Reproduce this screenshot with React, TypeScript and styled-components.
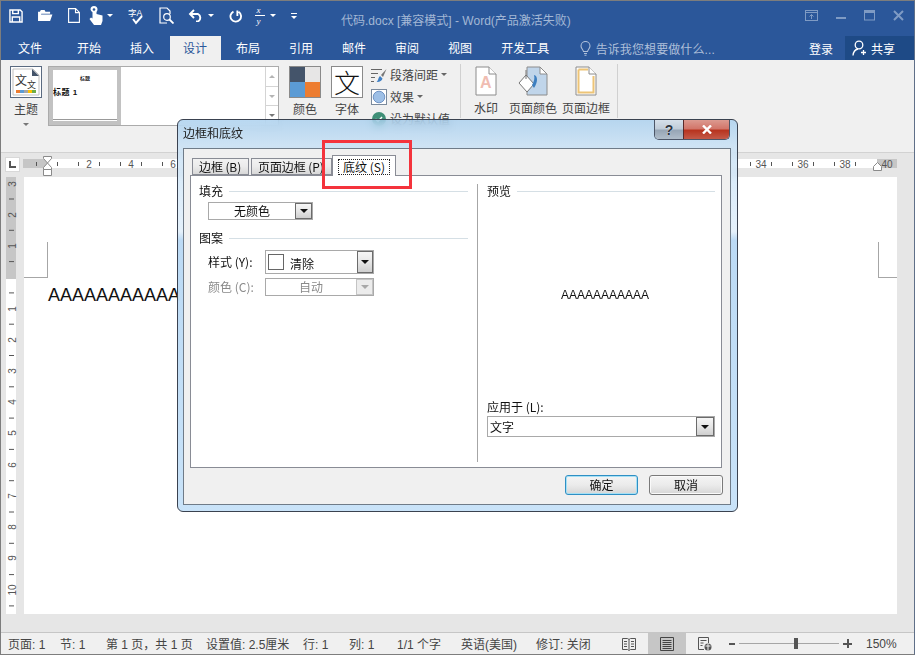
import React from 'react';
import styled, { createGlobalStyle } from 'styled-components';

const GlobalStyle = createGlobalStyle`
  html, body { margin: 0; padding: 0; background: #fff; }
  body { font-family: "Liberation Sans", "Noto Sans CJK SC", sans-serif; font-size: 12px; }
  * { box-sizing: border-box; }
`;

const Window = styled.div`
  position: relative;
  width: 915px;
  height: 655px;
  display: flex;
  flex-direction: column;
  overflow: hidden;
  border: 1px solid #7d7d7d;
  border-right-color: #5f6f88;
  background: #e6e6e6;
`;

/* title bar */
const TitleBar = styled.div`
  height: 35px;
  flex: none;
  display: flex;
  align-items: center;
  position: relative;
  background: #2b579a;
  padding: 0 0 6px 8px;
`;
const Qat = styled.div`
  display: flex;
  align-items: center;
  height: 29px;
`;
const QatIcon = styled.svg<{ $ml: number }>`
  margin-left: ${(p) => p.$ml}px;
  flex: none;
  display: block;
`;
const DocTitle = styled.div`
  position: absolute;
  left: 340px;
  top: 12px;
  color: #a3b7d5;
  font-size: 12px;
  line-height: 16px;
  white-space: nowrap;
`;
const WinButtons = styled.div`
  position: absolute;
  right: 10px;
  top: 9px;
  display: flex;
  gap: 18px;
`;

/* tabs */
const TabRow = styled.div`
  height: 24px;
  flex: none;
  display: flex;
  gap: 2px;
  align-items: stretch;
  background: #2b579a;
`;
const Tab = styled.div<{ $active?: boolean; $file?: boolean }>`
  width: ${(p) => (p.$file ? '58px' : 'auto')};
  margin-right: ${(p) => (p.$file ? '2.5px' : '0')};
  padding: 0 13.5px 1px;
  display: flex;
  align-items: center;
  justify-content: center;
  white-space: nowrap;
  font-size: 12px;
  color: ${(p) => (p.$active ? '#2b579a' : '#fff')};
  background: ${(p) => (p.$active ? '#f0f0f0' : 'transparent')};
`;
const TellMe = styled.div`
  margin-left: 15px;
  display: flex;
  align-items: center;
  gap: 5px;
  color: #aebfd9;
  font-size: 12px;
  letter-spacing: 0.1px;
`;
const SignIn = styled.div`
  margin-left: auto;
  display: flex;
  align-items: center;
  color: #fff;
  font-size: 12px;
`;
const Share = styled.div`
  margin-left: 10px;
  width: 69px;
  display: flex;
  align-items: center;
  gap: 4px;
  padding-left: 7px;
  background: #1e4a86;
  color: #fff;
  font-size: 12px;
`;

/* ribbon */
const Ribbon = styled.div`
  height: 93px;
  flex: none;
  display: flex;
  align-items: flex-start;
  padding: 6px 0 0 9px;
  background: #f0f0f0;
  border-bottom: 1px solid #d2d2d2;
`;
const LargeBtn = styled.div<{ $w: number; $ml?: number }>`
  width: ${(p) => p.$w}px;
  margin-left: ${(p) => p.$ml ?? 0}px;
  flex: none;
  display: flex;
  flex-direction: column;
  align-items: center;
  color: #444;
  font-size: 12px;
  line-height: 16px;
  white-space: nowrap;
`;
const BtnLabel = styled.div<{ $mt?: number }>`
  height: 16px;
  margin-top: ${(p) => p.$mt ?? 4}px;
`;
const IconBox = styled.div`
  width: 32px;
  height: 32px;
  flex: none;
`;
const ThemeFrame = styled(IconBox)`
  border: 1px solid #5a6a80;
  background: #fff;
  padding: 1px;
`;
const ColorGrid = styled(IconBox)`
  display: grid;
  grid-template-columns: 1fr 1fr;
  grid-template-rows: 1fr 1fr;
  border: 1px solid #8a8a8a;
`;
const ColorCell = styled.div<{ $c: string }>`
  background: ${(p) => p.$c};
`;
const FontFrame = styled(IconBox)`
  border: 1px solid #8a8a8a;
  background: #fff;
  display: flex;
  align-items: center;
  justify-content: center;
  color: #111;
  font-family: "Noto Sans CJK SC", serif;
  font-weight: 300;
  font-size: 26px;
  line-height: 28px;
`;
const Gallery = styled.div`
  width: 231px;
  height: 60px;
  margin-left: 6px;
  flex: none;
  display: flex;
  justify-content: space-between;
  background: #fff;
  border: 1px solid #ababab;
`;
const Thumb = styled.div`
  width: 72px;
  height: 58px;
  border: 4px solid #c2c2c2;
  border-top-width: 3px;
  background: #fff;
  display: flex;
  flex-direction: column;
  overflow: hidden;
`;
const ThumbHead = styled.div`
  font-size: 5px;
  line-height: 6px;
  font-weight: 700;
  text-align: center;
  margin-top: 5px;
  color: #222;
`;
const ThumbTitle = styled.div`
  font-size: 8px;
  line-height: 10px;
  font-weight: 700;
  margin-top: 7px;
  color: #111;
  letter-spacing: 0.5px;
`;
const ThumbLine = styled.div`
  margin-top: auto;
  height: 1px;
  margin-bottom: 1px;
  background: #999;
`;
const GalleryScroll = styled.div`
  width: 13px;
  display: flex;
  flex-direction: column;
  border-left: 1px solid #d4d4d4;
`;
const ScrollBtn = styled.div<{ $last?: boolean }>`
  flex: 1;
  display: flex;
  align-items: center;
  justify-content: center;
  border-bottom: ${(p) => (p.$last ? 'none' : '1px solid #d4d4d4')};
`;
const TriUp = styled.span`
  width: 0;
  height: 0;
  border: 3px solid transparent;
  border-top: 0;
  border-bottom: 3px solid #b4b4b4;
`;
const TriDown = styled.span<{ $c?: string; $ml?: number; $mt?: number }>`
  width: 0;
  height: 0;
  flex: none;
  margin-left: ${(p) => p.$ml ?? 0}px;
  margin-top: ${(p) => p.$mt ?? 0}px;
  border: 3px solid transparent;
  border-bottom: 0;
  border-top: 3px solid ${(p) => p.$c ?? '#b4b4b4'};
`;
const SmallList = styled.div`
  width: 90px;
  height: 54px;
  margin-left: 8px;
  flex: none;
  border-right: 1px solid #d0d0d0;
  margin-top: -2px;
  padding-top: 2px;
  display: flex;
  flex-direction: column;
  gap: 5px;
`;
const SmallRow = styled.div`
  height: 17px;
  flex: none;
  display: flex;
  align-items: center;
  gap: 3px;
  color: #444;
  font-size: 12px;
  white-space: nowrap;
`;
const PageGroup = styled.div`
  height: 54px;
  margin-top: -2px;
  padding-top: 2px;
  width: 157px;
  flex: none;
  display: flex;
  border-right: 1px solid #d0d0d0;
`;

/* ruler */
const RulerRow = styled.div`
  height: 24px;
  flex: none;
  display: flex;
  padding-left: 4px;
  background: #e6e6e6;
`;
const RulerCorner = styled.div`
  width: 15px;
  height: 15px;
  margin-top: 4px;
  background: #fff;
  border: 1px solid #d8d8d8;
  display: flex;
  align-items: center;
  justify-content: center;
`;
const RulerSvg = styled.svg`
  margin-left: 3px;
  display: block;
  overflow: visible;
  text {
    font-family: "Liberation Sans", sans-serif;
    font-size: 10px;
    fill: #555;
    text-anchor: middle;
  }
`;

/* document */
const DocArea = styled.div`
  flex: 1;
  min-height: 0;
  display: flex;
  padding: 0 17px 18px 5px;
`;
const VRulerSvg = styled(RulerSvg)`
  margin-left: 0;
  flex: none;
`;
const Page = styled.div`
  flex: 1;
  margin-left: 7px;
  background: #fff;
`;
const MarginMarks = styled.div`
  display: flex;
  justify-content: space-between;
  padding-top: 65px;
`;
const CropMark = styled.div<{ $side: 'left' | 'right' }>`
  height: 36px;
  width: ${(p) => (p.$side === 'left' ? '24px' : '19px')};
  border-bottom: 1px solid #a6a6a6;
  ${(p) => (p.$side === 'left' ? 'border-right' : 'border-left')}: 1px solid #a6a6a6;
`;
const BodyText = styled.div`
  margin-top: 6px;
  padding-left: 24px;
  font-size: 18px;
  line-height: 22px;
  color: #111;
`;

/* status bar */
const StatusBar = styled.div`
  height: 22px;
  flex: none;
  display: flex;
  align-items: center;
  padding-left: 7px;
  background: #f0f0f0;
  border-top: 1px solid #c6c6c6;
  color: #444;
  font-size: 12px;
  white-space: nowrap;
`;
const StatusItem = styled.div<{ $w: number }>`
  width: ${(p) => p.$w}px;
  flex: none;
`;
const ViewBtn = styled.div<{ $active?: boolean }>`
  width: 38px;
  height: 100%;
  flex: none;
  display: flex;
  align-items: center;
  justify-content: center;
  background: ${(p) => (p.$active ? '#c6c6c6' : 'transparent')};
`;
const ZoomPlus = styled.div`
  width: 9px;
  height: 9px;
  flex: none;
  background:
    linear-gradient(#555, #555) center / 9px 2px no-repeat,
    linear-gradient(#555, #555) center / 2px 9px no-repeat;
`;
const ZoomMinus = styled.div`
  width: 6px;
  height: 2px;
  margin-left: 5px;
  background: #555;
  flex: none;
`;
const ZoomTrack = styled.div`
  position: relative;
  width: 100px;
  height: 1px;
  margin: 0 4px;
  background: #a6a6a6;
  flex: none;
`;
const ZoomKnob = styled.div`
  position: absolute;
  left: 55px;
  top: -5px;
  width: 4px;
  height: 11px;
  background: #555;
`;
const ZoomPct = styled.div`
  margin-left: 14px;
`;

/* dialog */
const Dialog = styled.div`
  position: absolute;
  left: 176px;
  top: 118px;
  width: 561px;
  height: 393px;
  display: flex;
  flex-direction: column;
  padding: 0 6px 6px 5px;
  border: 1px solid #3a4250;
  border-radius: 6px;
  font-family: "Noto Sans CJK SC", "Liberation Sans", sans-serif;
  color: #111;
  backdrop-filter: blur(5px);
  background: linear-gradient(
    180deg,
    rgba(160, 203, 238, 0.72) 0,
    rgba(195, 223, 246, 0.72) 28px,
    rgba(224, 238, 250, 0.85) 112px,
    rgba(184, 216, 244, 0.95) 120px,
    rgba(198, 225, 248, 0.95) 100%
  );
`;
const DialogHead = styled.div`
  height: 28px;
  flex: none;
  display: flex;
  align-items: center;
  padding-bottom: 4px;
  font-size: 12px;
  color: #222;
`;
const CaptionBtns = styled.div`
  position: absolute;
  top: 0;
  right: 7px;
  height: 20px;
  display: flex;
  border: 1px solid #4c5668;
  border-top: 0;
  border-radius: 0 0 5px 5px;
  overflow: hidden;
`;
const CaptionBtn = styled.div<{ $close?: boolean }>`
  display: flex;
  align-items: center;
  justify-content: center;
  width: ${(p) => (p.$close ? '46px' : '28px')};
  border-left: ${(p) => (p.$close ? '1px solid #5a2a2a' : 'none')};
  color: #fff;
  font-family: "Liberation Sans", sans-serif;
  font-weight: 700;
  background: ${(p) =>
    p.$close
      ? 'linear-gradient(180deg, #dc9a90 0, #d2766a 45%, #b8341f 55%, #c45a48 100%)'
      : 'linear-gradient(180deg, #d6e0ea 0, #c0ccd8 45%, #97a6b6 55%, #b0bdca 100%)'};
`;
const HelpMark = styled.span`
  font-size: 14px;
  line-height: 14px;
  color: #2c3440;
  text-shadow: 0 0 1px #fff;
`;
const Client = styled.div`
  flex: 1;
  min-height: 0;
  display: flex;
  flex-direction: column;
  padding: 6px 8px 6px 6px;
  background: #f0f0f0;
  border: 1px solid #6f7b88;
`;
const TabStrip = styled.div`
  height: 20px;
  flex: none;
  display: flex;
  align-items: flex-end;
  padding-left: 2px;
  position: relative;
  z-index: 1;
`;
const DlgTab = styled.div<{ $w: number }>`
  width: ${(p) => p.$w}px;
  height: 17px;
  margin-right: 2px;
  padding-left: 6px;
  border: 1px solid #898c95;
  background: linear-gradient(180deg, #f2f2f2 0, #ebebeb 50%, #d8d8d8 100%);
  font-size: 12px;
  line-height: 16px;
  letter-spacing: -0.1px;
  overflow: hidden;
  white-space: nowrap;
`;
const ActiveTab = styled.div`
  width: 64px;
  height: 21px;
  margin-left: -2px;
  margin-bottom: -1px;
  padding: 3px 5px 0;
  border: 1px solid #898c95;
  border-bottom: 0;
  background: #fff;
  font-size: 12px;
  white-space: nowrap;
`;
const FocusLabel = styled.span`
  display: block;
  line-height: 14px;
  height: 16px;
  border: 1px dotted #222;
  text-align: center;
`;
const TabPanel = styled.div`
  height: 293px;
  flex: none;
  display: grid;
  grid-template-columns: 287px 1fr;
  padding: 8px 0 5px;
  background: #fff;
  border: 1px solid #898c95;
`;
const LeftCol = styled.div`
  padding: 0 9px 0 8px;
  border-right: 1px solid #a6a6a6;
`;
const RightCol = styled.div`
  padding: 0 6px 25px 9px;
  display: flex;
  flex-direction: column;
`;
const GroupTitle = styled.div<{ $mt?: number }>`
  height: 14px;
  margin-top: ${(p) => p.$mt ?? 0}px;
  display: flex;
  align-items: center;
  gap: 6px;
  line-height: 14px;
  font-size: 12px;
  white-space: nowrap;
  &::after {
    content: '';
    flex: 1;
    height: 1px;
    background: #d5dfe5;
  }
`;
const Select = styled.div<{ $w?: number; $h: number; $off?: boolean }>`
  width: ${(p) => (p.$w ? `${p.$w}px` : '100%')};
  height: ${(p) => p.$h}px;
  flex: none;
  display: flex;
  align-items: center;
  background: #fff;
  border: 1px solid #a9a9a9;
  color: ${(p) => (p.$off ? '#8a8a8a' : '#111')};
  font-size: 12px;
`;
const SelectText = styled.div<{ $center?: boolean; $pl?: number; $pt?: number }>`
  flex: 1;
  padding-left: ${(p) => p.$pl ?? 0}px;
  padding-top: ${(p) => p.$pt ?? 0}px;
  text-align: ${(p) => (p.$center ? 'center' : 'left')};
  line-height: 16px;
`;
const DropBtn = styled.div<{ $off?: boolean; $w: number }>`
  width: ${(p) => p.$w}px;
  height: 100%;
  flex: none;
  display: flex;
  align-items: center;
  justify-content: center;
  border: 1px solid ${(p) => (p.$off ? '#c4c4c4' : '#6b6b6b')};
  background: ${(p) => (p.$off ? '#ececec' : 'linear-gradient(180deg, #f6f6f6 0, #e6e6e6 50%, #cfcfcf 100%)')};
`;
const BlackTri = styled.span<{ $off?: boolean }>`
  width: 0;
  height: 0;
  border: 4px solid transparent;
  border-bottom: 0;
  border-top: 4px solid ${(p) => (p.$off ? '#a8a8a8' : '#111')};
`;
const FillWrap = styled.div`
  margin: 4px 0 0 9px;
`;
const FormRow = styled.div<{ $mt: number; $off?: boolean }>`
  margin: ${(p) => p.$mt}px 0 0 9px;
  display: flex;
  align-items: center;
  color: ${(p) => (p.$off ? '#8a8a8a' : '#111')};
  font-size: 12px;
`;
const FormLabel = styled.div`
  width: 57px;
  flex: none;
  white-space: nowrap;
  padding-bottom: 1px;
`;
const Swatch = styled.div`
  width: 16px;
  height: 16px;
  margin-left: 2px;
  flex: none;
  background: #fff;
  border: 1px solid #666;
`;
const PreviewBox = styled.div`
  flex: 1;
  display: flex;
  align-items: center;
  justify-content: center;
  padding: 0 0 8px 8px;
  font-family: "Liberation Sans", sans-serif;
  font-size: 12px;
`;
const ApplyLabel = styled.div`
  height: 14px;
  margin-bottom: 2px;
  line-height: 14px;
  font-size: 12px;
`;
const DialogFooter = styled.div`
  flex: 1;
  display: flex;
  align-items: center;
  justify-content: flex-end;
  gap: 11px;
  padding-top: 3px;
  margin-right: -1px;
`;
const Button = styled.div<{ $primary?: boolean }>`
  width: ${(p) => (p.$primary ? '73px' : '74px')};
  height: 20px;
  display: flex;
  align-items: center;
  justify-content: center;
  font-size: 12px;
  border: 1px solid ${(p) => (p.$primary ? '#2f8fc4' : '#7a7a7a')};
  border-radius: 3px;
  background: linear-gradient(180deg, #f4f4f4 0, #ebebeb 50%, #d6d6d6 100%);
  box-shadow: ${(p) => (p.$primary ? 'inset 0 0 0 1px #a5e0f5' : 'inset 0 0 0 1px #fafafa')};
`;
const Annotation = styled.div`
  position: absolute;
  left: 321px;
  top: 139px;
  width: 90px;
  height: 49px;
  border: 3px solid #f4333c;
  pointer-events: none;
`;

const tabs = ['开始', '插入', '设计', '布局', '引用', '邮件', '审阅', '视图', '开发工具'];
const status: [string, number][] = [
  ['页面: 1', 52],
  ['节: 1', 46],
  ['第 1 页，共 1 页', 100],
  ['设置值: 2.5厘米', 97],
  ['行: 1', 46],
  ['列: 1', 48],
  ['1/1 个字', 64],
  ['英语(美国)', 75],
  ['修订: 关闭', 74],
];
const colorCells = ['#44546a', '#e7e6e6', '#5b9bd5', '#ed7d31'];

// the ruler stretch under the dialog never shows
const rulerVisible = (x: number) => x < 177 || x > 738;

const HRuler = () => {
  const ticks = [];
  for (let x = 36; x <= 855; x += 21) if (rulerVisible(x)) ticks.push(x);
  const nums = [];
  for (let n = 2; n <= 40; n += 2) if (rulerVisible(89 + (n - 2) * 21)) nums.push(n);
  return (
    <RulerSvg width="874" height="24" viewBox="23 153 874 24">
      <rect x="23" y="159" width="874" height="9" fill="#fff" />
      <rect x="23" y="159" width="24" height="9" fill="#c6c6c6" />
      <rect x="877" y="159" width="20" height="9" fill="#c6c6c6" />
      {ticks.map((x) => (
        <line key={x} x1={x + 0.5} x2={x + 0.5} y1="162" y2="166" stroke="#555" />
      ))}
      {nums.map((n) => (
        <text key={n} x={89 + (n - 2) * 21} y="168">
          {n}
        </text>
      ))}
      <path d="M43.5 156.5h8v2l-4 4.5-4-4.5zM43.5 169.5v-2l4-4.5 4 4.5v2zM43.5 169.5h8v6h-8z" fill="#fff" stroke="#8a8a8a" />
      <path d="M873.5 170.5v-4l4-4 4 4v4z" fill="#fff" stroke="#8a8a8a" />
    </RulerSvg>
  );
};

const VRuler = () => {
  const ticks = [];
  for (let y = 199; y < 610; y += 31.3) ticks.push(y);
  const nums = [
    [3, 184],
    [2, 215],
    [1, 246],
    [1, 309],
    [2, 340],
    [3, 371],
    [4, 402],
    [5, 433],
    [6, 465],
    [7, 496],
    [8, 527],
    [9, 558],
    [10, 590],
  ];
  return (
    <VRulerSvg width="11" height="437" viewBox="6 177 11 437">
      <rect x="6" y="177" width="10" height="102" fill="#c6c6c6" />
      <rect x="6" y="279" width="10" height="335" fill="#fff" />
      {ticks.map((y) => (
        <line key={y} x1="9" x2="14" y1={y} y2={y} stroke="#555" />
      ))}
      {nums.map(([n, y]) => (
        <text key={y} transform={`translate(15.5 ${y}) rotate(-90)`}>
          {n}
        </text>
      ))}
    </VRulerSvg>
  );
};

const QatIcons = () => (
  <Qat>
    <QatIcon $ml={0} width="14" height="14" viewBox="0 0 15 15" fill="none" stroke="#fff" strokeWidth="1.5">
      <path d="M1 1h11l2 2v11H1z" />
      <path d="M4 1v4h6V1M3.5 14V8.5h8V14" />
    </QatIcon>
    <QatIcon $ml={14} width="16" height="13" viewBox="0 0 17 14" fill="#fff">
      <path d="M1 13V3h2l1-2h4l1 2h5v2H4.500L2 11.500 4 6h12.500L14 13z" />
    </QatIcon>
    <QatIcon $ml={15} width="12" height="15" viewBox="0 0 12 15" fill="none" stroke="#fff" strokeWidth="1.100">
      <path d="M.6.600h7l3.800 3.800v10H.6zM7.500.600v4h4" />
    </QatIcon>
    <QatIcon $ml={9} width="15" height="19" viewBox="0 0 15 19" fill="#fff">
      <path d="M1.500 3.500a3.500 3.500 0 0 1 7 0c0 1-.4 1.800-1 2.400V8l6 1.500V15l-1.500 4H5l-4.500-6L2 11.500l1.500 1V6.200A3.700 3.700 0 0 1 1.500 3.500z" />
      <circle cx="5" cy="3.500" r="1.300" fill="#2b579a" />
    </QatIcon>
    <TriDown $c="#fff" $ml={3} />
    <QatIcon $ml={15} width="18" height="18" viewBox="0 0 18 18" fill="none" stroke="#fff">
      <text x="0" y="9" fontSize="8.500" fill="#fff" stroke="none">字A</text>
      <path d="M5 12l3 4 6-7" strokeWidth="2" />
    </QatIcon>
    <QatIcon $ml={13} width="15" height="17" viewBox="0 0 15 17" fill="none" stroke="#fff" strokeWidth="1.200">
      <path d="M8 16H1V1h7l3 3v3" />
      <circle cx="8" cy="10" r="3.300" />
      <path d="M10.500 12.500L14.500 16.500" strokeWidth="1.800" />
    </QatIcon>
    <QatIcon $ml={14} width="16" height="13" viewBox="0 0 16 13" fill="none" stroke="#fff" strokeWidth="1.900">
      <path d="M6 1L2 5l4 4M2 5h8a4.200 4.200 0 0 1 0 7.500H8" />
    </QatIcon>
    <TriDown $c="#fff" $ml={4} />
    <QatIcon $ml={15} width="13" height="14" viewBox="0 0 14 14" fill="none" stroke="#fff" strokeWidth="2">
      <path d="M9 1v5h-1M10.300 2.500a5.700 5.700 0 1 1-5.500-.3" />
    </QatIcon>
    <QatIcon $ml={13} width="10" height="22" viewBox="0 0 10 22" fill="#fff">
      <text x="1.500" y="8" fontSize="9" fontStyle="italic" fontFamily="Liberation Serif, serif">x</text>
      <rect x="0" y="10" width="10" height="1" />
      <text x="1.500" y="19" fontSize="9" fontStyle="italic" fontFamily="Liberation Serif, serif">y</text>
    </QatIcon>
    <TriDown $c="#fff" $ml={5} />
    <QatIcon $ml={15} width="6" height="6" viewBox="0 0 6 6" fill="#fff">
      <rect width="6" height="1" />
      <path d="M0 3h6L3 6z" />
    </QatIcon>
  </Qat>
);

export default function App() {
  return (
    <>
      <GlobalStyle />
      <Window>
        <TitleBar>
          <QatIcons />
          <DocTitle>代码.docx [兼容模式] - Word(产品激活失败)</DocTitle>
          <WinButtons>
            <svg width="13" height="11" viewBox="0 0 13 11" fill="none" stroke="#7f9bc4">
              <rect x=".5" y=".5" width="12" height="10" />
              <path d="M.5 2.500h12M6.500 9V4.500M4.500 6.500l2-2 2 2" />
            </svg>
            <svg width="10" height="11" viewBox="0 0 10 11" fill="#7f9bc4">
              <rect y="7" width="10" height="2" />
            </svg>
            <svg width="11" height="11" viewBox="0 0 11 11" fill="none" stroke="#7f9bc4">
              <rect x=".5" y=".5" width="10" height="9.500" />
              <path d="M0 2h11" strokeWidth="2" />
            </svg>
            <svg width="11" height="11" viewBox="0 0 11 11" stroke="#7f9bc4" strokeWidth="2">
              <path d="M1 1l9 9M10 1l-9 9" />
            </svg>
          </WinButtons>
        </TitleBar>

        <TabRow>
          <Tab $file>文件</Tab>
          {tabs.map((t) => (
            <Tab key={t} $active={t === '设计'}>
              {t}
            </Tab>
          ))}
          <TellMe>
            <svg width="11" height="15" viewBox="0 0 11 15" fill="none" stroke="#aebfd9" strokeWidth="1.100">
              <path d="M3.500 10.500C3.200 8.500 1 7.500 1 5a4.500 4.500 0 0 1 9 0c0 2.500-2.200 3.500-2.500 5.500zM4 12.500h3M4.500 14.300h2" />
            </svg>
            告诉我您想要做什么...
          </TellMe>
          <SignIn>登录</SignIn>
          <Share>
            <svg width="15" height="16" viewBox="0 0 15 16" fill="none" stroke="#fff" strokeWidth="1.300">
              <circle cx="7" cy="5" r="3.800" />
              <path d="M1 15.500c.3-3.500 2.500-6 5-6.500M11.500 10v5M9 12.500h5" />
            </svg>
            共享
          </Share>
        </TabRow>

        <Ribbon>
          <LargeBtn $w={32}>
            <ThemeFrame>
              <svg width="28" height="28" viewBox="0 0 28 28">
                <path d="M1 1h20l6 6v20H1z" fill="#fff" stroke="#bfbfbf" />
                <path d="M20 1l7 7h-7z" fill="#44546a" />
                <text x="3" y="17" fontSize="12" fill="#333">文</text>
                <text x="15" y="20" fontSize="9" fill="#333">文</text>
                <rect x="4" y="22" width="4" height="3" fill="#ed7d31" />
                <rect x="8" y="22" width="4" height="3" fill="#5b9bd5" />
                <rect x="12" y="22" width="4" height="3" fill="#a5a5a5" />
                <rect x="16" y="22" width="4" height="3" fill="#ffc000" />
                <rect x="20" y="22" width="4" height="3" fill="#70ad47" />
              </svg>
            </ThemeFrame>
            <BtnLabel>主题</BtnLabel>
            <TriDown $c="#777" $mt={5} />
          </LargeBtn>

          <Gallery>
            <Thumb>
              <ThumbHead>标题</ThumbHead>
              <ThumbTitle>标题 1</ThumbTitle>
              <ThumbLine />
            </Thumb>
            <GalleryScroll>
              <ScrollBtn>
                <TriUp />
              </ScrollBtn>
              <ScrollBtn>
                <TriDown />
              </ScrollBtn>
              <ScrollBtn $last>
                <TriDown $c="#777" />
              </ScrollBtn>
            </GalleryScroll>
          </Gallery>

          <LargeBtn $w={32} $ml={10}>
            <ColorGrid>
              {colorCells.map((c) => (
                <ColorCell key={c} $c={c} />
              ))}
            </ColorGrid>
            <BtnLabel>颜色</BtnLabel>
          </LargeBtn>

          <LargeBtn $w={32} $ml={10}>
            <FontFrame>文</FontFrame>
            <BtnLabel>字体</BtnLabel>
          </LargeBtn>

          <SmallList>
            <SmallRow>
              <svg width="16" height="16" viewBox="0 0 16 16" fill="none" stroke="#666">
                <path d="M0 2.500h11M0 6.500h7M0 10.500h4M0 14.500h3" />
                <path d="M15.500 2L10 8l2 2z" fill="#777" stroke="none" />
                <path d="M9 9l2.500 2.500C11 14 8 15.500 5.500 15 7.500 14 7 10.500 9 9z" fill="#3f7fc4" stroke="none" />
              </svg>
              段落间距
              <TriDown $c="#666" />
            </SmallRow>
            <SmallRow>
              <svg width="16" height="16" viewBox="0 0 16 16">
                <rect x=".5" y=".5" width="15" height="15" fill="#fff" stroke="#7b8a9c" />
                <circle cx="8" cy="8" r="5.800" fill="#9dbfe6" stroke="#6f93c4" />
              </svg>
              效果
              <TriDown $c="#666" />
            </SmallRow>
            <SmallRow>
              <svg width="16" height="16" viewBox="0 0 16 16">
                <circle cx="8" cy="8" r="7" fill="#3f8f77" />
                <path d="M4.500 8l2.500 2.500 4-4.500" fill="none" stroke="#fff" strokeWidth="1.500" />
              </svg>
              设为默认值
            </SmallRow>
          </SmallList>

          <PageGroup>
            <LargeBtn $w={50}>
              <svg width="22" height="30" viewBox="0 0 22 30">
                <path d="M1 1h13l7 7v21H1z" fill="#fff" stroke="#8c8c8c" />
                <path d="M14 1v7h7" fill="#fff" stroke="#8c8c8c" />
                <text x="5" y="22" fontSize="16" fontWeight="700" fill="#f0bdb2" fontFamily="Liberation Sans, sans-serif">A</text>
              </svg>
              <BtnLabel $mt={5}>水印</BtnLabel>
            </LargeBtn>
            <LargeBtn $w={44}>
              <svg width="30" height="30" viewBox="0 0 30 30">
                <path d="M9 1h13l7 7v21H9z" fill="#c0d5ea" stroke="#8c8c8c" />
                <path d="M22 1v7h7z" fill="#fff" stroke="#8c8c8c" />
                <path d="M8 9l8 9-7 8-8-9z" fill="#fff" stroke="#777" />
                <path d="M8 4v9" stroke="#777" />
                <path d="M16 9c4 1 4 7 0 13l-2-3c2-3 3-7 2-10z" fill="#3d7fc0" />
              </svg>
              <BtnLabel $mt={5}>页面颜色</BtnLabel>
            </LargeBtn>
            <LargeBtn $w={48} $ml={7}>
              <svg width="22" height="30" viewBox="0 0 22 30">
                <path d="M1 1h13l7 7v21H1z" fill="#fff" stroke="#8c8c8c" />
                <path d="M14 1v7h7" fill="#fff" stroke="#8c8c8c" />
                <path d="M3.500 3.500h9.500M3.500 3.500v23h15V10" fill="none" stroke="#edc476" strokeWidth="2" />
              </svg>
              <BtnLabel $mt={5}>页面边框</BtnLabel>
            </LargeBtn>
          </PageGroup>
        </Ribbon>

        <RulerRow>
          <RulerCorner>
            <svg width="7" height="7" viewBox="0 0 7 7" fill="#555">
              <path d="M0 0h2v5h5v2H0z" />
            </svg>
          </RulerCorner>
          <HRuler />
        </RulerRow>

        <DocArea>
          <VRuler />
          <Page>
            <MarginMarks>
              <CropMark $side="left" />
              <CropMark $side="right" />
            </MarginMarks>
            <BodyText>AAAAAAAAAAA</BodyText>
          </Page>
        </DocArea>

        <StatusBar>
          {status.map(([t, w]) => (
            <StatusItem key={t} $w={w}>
              {t}
            </StatusItem>
          ))}
          <ViewBtn>
            <svg width="14" height="14" viewBox="0 0 14 14" fill="none" stroke="#555">
              <path d="M.5 1.500h5l1.500 1 1.500-1h5v11h-5l-1.500 1-1.500-1h-5zM7 2.500v10M2 4.500h3M2 7h3M2 9.500h3M9 4.500h3M9 7h3M9 9.500h3" />
            </svg>
          </ViewBtn>
          <ViewBtn $active>
            <svg width="14" height="14" viewBox="0 0 14 14" fill="none" stroke="#444">
              <path d="M.5.500h13v13H.5zM2.500 3.500h9M2.500 5.500h9M2.500 7.500h9M2.500 9.500h9M2.500 11.500h9" />
            </svg>
          </ViewBtn>
          <ViewBtn>
            <svg width="14" height="14" viewBox="0 0 14 14" fill="none" stroke="#555">
              <path d="M6 12.500H.5V.500h10V6M2.500 3.500h6M2.500 6h3M2.500 8.500h2" />
              <circle cx="10" cy="10" r="3.500" fill="#555" stroke="none" />
              <path d="M7.500 9h5M10 6.500v7" stroke="#f0f0f0" />
            </svg>
          </ViewBtn>
          <ZoomMinus />
          <ZoomTrack>
            <ZoomKnob />
          </ZoomTrack>
          <ZoomPlus />
          <ZoomPct>150%</ZoomPct>
        </StatusBar>

        <Dialog>
          <DialogHead>边框和底纹</DialogHead>
          <CaptionBtns>
            <CaptionBtn>
              <HelpMark>?</HelpMark>
            </CaptionBtn>
            <CaptionBtn $close>
              <svg width="12" height="9" viewBox="0 0 12 9" stroke="#fff" strokeWidth="2.400">
                <path d="M2 .5l8 8M10 .5l-8 8" />
              </svg>
            </CaptionBtn>
          </CaptionBtns>
          <Client>
            <TabStrip>
              <DlgTab $w={57}>边框 (B)</DlgTab>
              <DlgTab $w={81}>页面边框 (P)</DlgTab>
              <ActiveTab>
                <FocusLabel>底纹 (S)</FocusLabel>
              </ActiveTab>
            </TabStrip>
            <TabPanel>
              <LeftCol>
                <GroupTitle>填充</GroupTitle>
                <FillWrap>
                  <Select $w={105} $h={18}>
                    <SelectText $center>无颜色</SelectText>
                    <DropBtn $w={17}>
                      <BlackTri />
                    </DropBtn>
                  </Select>
                </FillWrap>
                <GroupTitle $mt={11}>图案</GroupTitle>
                <FormRow $mt={5}>
                  <FormLabel>样式 (Y):</FormLabel>
                  <Select $w={109} $h={24}>
                    <Swatch />
                    <SelectText $pl={6} $pt={3}>
                      清除
                    </SelectText>
                    <DropBtn $w={16}>
                      <BlackTri />
                    </DropBtn>
                  </Select>
                </FormRow>
                <FormRow $mt={4} $off>
                  <FormLabel>颜色 (C):</FormLabel>
                  <Select $w={109} $h={18} $off>
                    <SelectText $center>自动</SelectText>
                    <DropBtn $w={17} $off>
                      <BlackTri $off />
                    </DropBtn>
                  </Select>
                </FormRow>
              </LeftCol>
              <RightCol>
                <GroupTitle>预览</GroupTitle>
                <PreviewBox>AAAAAAAAAAA</PreviewBox>
                <ApplyLabel>应用于 (L):</ApplyLabel>
                <Select $h={21}>
                  <SelectText $pl={2}>文字</SelectText>
                  <DropBtn $w={18}>
                    <BlackTri />
                  </DropBtn>
                </Select>
              </RightCol>
            </TabPanel>
            <DialogFooter>
              <Button $primary>确定</Button>
              <Button>取消</Button>
            </DialogFooter>
          </Client>
        </Dialog>

        <Annotation />
      </Window>
    </>
  );
}
